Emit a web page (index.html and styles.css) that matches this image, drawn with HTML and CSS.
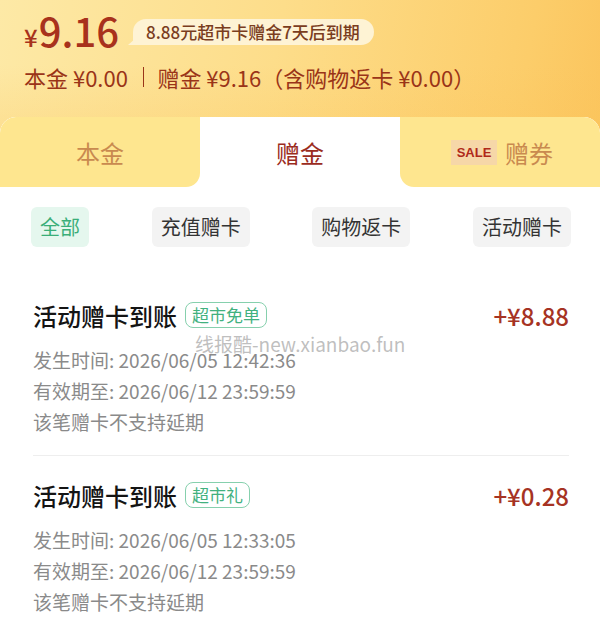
FILE: index.html
```html
<!DOCTYPE html>
<html lang="zh-CN">
<head>
<meta charset="utf-8">
<link rel="stylesheet" href="styles.css">
</head>
<body>
<div class="page">
  <header class="header">
    <div class="top">
      <div class="total"><span class="yen">¥</span><span class="num">9.16</span></div>
      <div class="pill">8.88元超市卡赠金7天后到期</div>
    </div>
    <div class="summary">
      <span>本金 ¥0.00</span><span class="sep"></span><span>赠金 ¥9.16（含购物返卡 ¥0.00）</span>
    </div>
    <nav class="tabs">
      <div class="tab tab-left">本金</div>
      <div class="tab tab-active">赠金</div>
      <div class="tab tab-right"><span class="sale">SALE</span>赠券</div>
    </nav>
  </header>

  <div class="filters">
    <span class="chip chip-active">全部</span>
    <span class="chip">充值赠卡</span>
    <span class="chip">购物返卡</span>
    <span class="chip">活动赠卡</span>
  </div>

  <div class="list">
    <div class="item item-first">
      <div class="item-head">
        <span class="title">活动赠卡到账</span>
        <span class="tag">超市免单</span>
        <span class="amount">+¥8.88</span>
      </div>
      <div class="details">
        <div>发生时间: 2026/06/05 12:42:36</div>
        <div>有效期至: 2026/06/12 23:59:59</div>
        <div>该笔赠卡不支持延期</div>
      </div>
      <div class="watermark">线报酷-new.xianbao.fun</div>
    </div>
    <div class="item">
      <div class="item-head">
        <span class="title">活动赠卡到账</span>
        <span class="tag">超市礼</span>
        <span class="amount">+¥0.28</span>
      </div>
      <div class="details">
        <div>发生时间: 2026/06/05 12:33:05</div>
        <div>有效期至: 2026/06/12 23:59:59</div>
        <div>该笔赠卡不支持延期</div>
      </div>
    </div>
  </div>
</div>
</body>
</html>
```
FILE: styles.css
```css
html, body {
  margin: 0;
  padding: 0;
  background: #ffffff;
}
body {
  font-family: "Noto Sans CJK SC", "Noto Sans", sans-serif;
  width: 600px;
  height: 617px;
  overflow: hidden;
}
.page {
  width: 600px;
}
.header {
  background:
    linear-gradient(180deg, rgba(251, 196, 90, 0) 35%, rgba(251, 196, 90, 0.45) 100%),
    linear-gradient(100deg, #fde9a6 0%, #fddd8a 45%, #fccd6a 85%, #fbc45c 100%);
}
.top {
  display: flex;
  align-items: center;
  height: 40px;
  padding: 12px 24px 0;
}
.total {
  color: #a8321c;
  display: flex;
  align-items: baseline;
}
.yen {
  font-size: 24px;
  font-weight: 500;
  margin-right: 1px;
}
.num {
  font-size: 40px;
  line-height: 40px;
  font-weight: 500;
}
.pill {
  position: relative;
  margin-left: 14px;
  height: 26px;
  line-height: 26px;
  padding: 0 14px 0 13px;
  font-size: 17px;
  font-weight: 500;
  color: #7a3d1e;
  background: #fef3d4;
  border-radius: 13px 13px 13px 3px;
}
.pill::before {
  content: "";
  position: absolute;
  left: -5px;
  bottom: 0;
  width: 0;
  height: 0;
  border-bottom: 7px solid #fef3d4;
  border-left: 8px solid transparent;
}
.summary {
  display: flex;
  align-items: center;
  margin-top: 10px;
  padding: 0 24px;
  height: 30px;
  line-height: 30px;
  font-size: 22px;
  color: #9a3418;
}
.sep {
  display: inline-block;
  width: 1.5px;
  height: 20px;
  background: #9a3418;
  margin: 0 13px 0 15px;
}
.tabs {
  margin-top: 25px;
  display: grid;
  grid-template-columns: 200px 200px 200px;
  height: 70px;
  background: #ffffff;
  border-radius: 16px 16px 0 0;
  overflow: hidden;
}
.tab {
  display: flex;
  align-items: center;
  justify-content: center;
  font-size: 24px;
  color: #c98a4f;
}
.tab-left {
  background: #fee68f;
  border-radius: 16px 0 14px 0;
}
.tab-right {
  background: #fee68f;
  border-radius: 0 16px 0 14px;
  padding-left: 4px;
}
.tab-active {
  background: #ffffff;
  color: #9b2c1e;
}
.sale {
  display: inline-block;
  width: 46px;
  height: 25px;
  line-height: 25px;
  text-align: center;
  background: #f6d7a8;
  color: #b0291a;
  font-family: "Liberation Sans", "DejaVu Sans", sans-serif;
  font-weight: 700;
  font-size: 13px;
  margin-right: 8px;
}
.filters {
  display: flex;
  justify-content: space-between;
  margin-top: 20px;
  padding: 0 29px 0 31px;
}
.chip {
  height: 40px;
  line-height: 40px;
  padding: 0 9px;
  border-radius: 6px;
  background: #f3f3f3;
  color: #333333;
  font-size: 20px;
}
.chip-active {
  background: #e5f7ee;
  color: #3aae78;
}
.list {
  padding: 29px 31px 0 33px;
}
.item {
  position: relative;
  padding: 24px 0 18px;
}
.item-first {
  border-bottom: 1px solid #eeeeee;
}
.item-head {
  display: flex;
  align-items: center;
  height: 30px;
}
.title {
  font-size: 24px;
  font-weight: 500;
  color: #141414;
}
.tag {
  margin-left: 8px;
  height: 24px;
  line-height: 24px;
  padding: 0 6px;
  border: 1.5px solid #86d0ad;
  border-radius: 8px;
  color: #42b17f;
  font-size: 17px;
}
.amount {
  margin-left: auto;
  font-size: 24px;
  font-weight: 500;
  color: #a63323;
}
.details {
  margin-top: 14px;
  font-size: 19px;
  line-height: 31px;
  color: #8a8a8a;
}
.watermark {
  position: absolute;
  left: 162px;
  top: 58px;
  font-size: 19px;
  line-height: 19px;
  color: rgba(170, 170, 170, 0.75);
  white-space: nowrap;
}
```
